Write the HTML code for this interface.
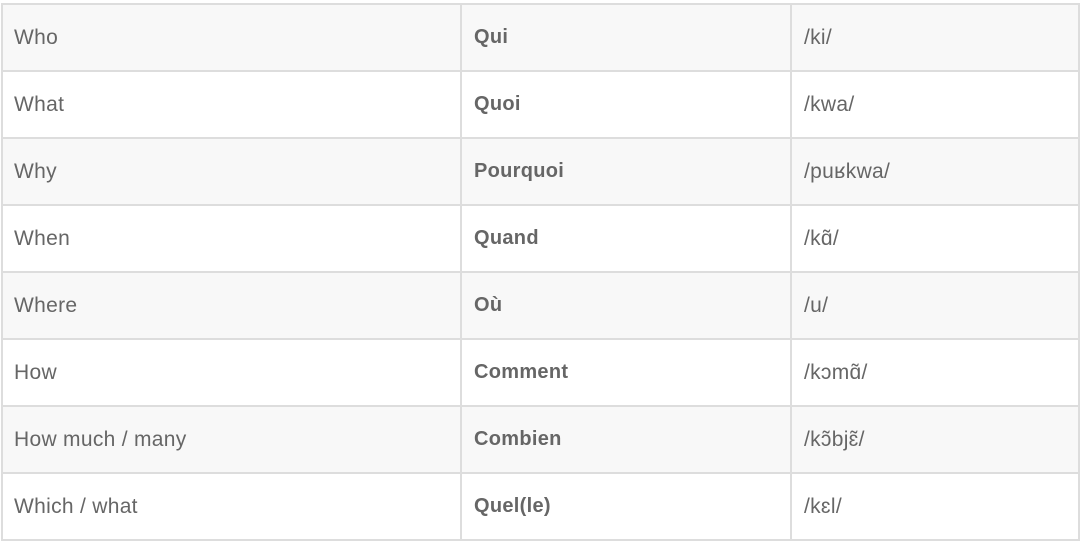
<!DOCTYPE html><html><head><style>
body{margin:0;background:#fff;width:1084px;height:544px;overflow:hidden}
table{position:absolute;left:1px;top:3px;width:1079px;border-collapse:collapse;font-family:"Liberation Sans",sans-serif;font-size:21px;letter-spacing:0.3px;color:#666}
td{border:2px solid #ddd;height:65px;padding:0 0 0 12px;vertical-align:middle}
tr:nth-child(odd) td{background:#f8f8f8}
td:nth-child(1){width:446px;padding-left:11px}
td:nth-child(2){width:316px;font-weight:bold;font-size:20px}
</style></head><body>
<table>
<tr><td>Who</td><td>Qui</td><td>/ki/</td></tr>
<tr><td>What</td><td>Quoi</td><td>/kwa/</td></tr>
<tr><td>Why</td><td>Pourquoi</td><td>/puʁkwa/</td></tr>
<tr><td>When</td><td>Quand</td><td>/kɑ̃/</td></tr>
<tr><td>Where</td><td>Où</td><td>/u/</td></tr>
<tr><td>How</td><td>Comment</td><td>/kɔmɑ̃/</td></tr>
<tr><td>How much / many</td><td>Combien</td><td>/kɔ̃bjɛ̃/</td></tr>
<tr><td>Which / what</td><td>Quel(le)</td><td>/kɛl/</td></tr>
</table>
</body></html>
